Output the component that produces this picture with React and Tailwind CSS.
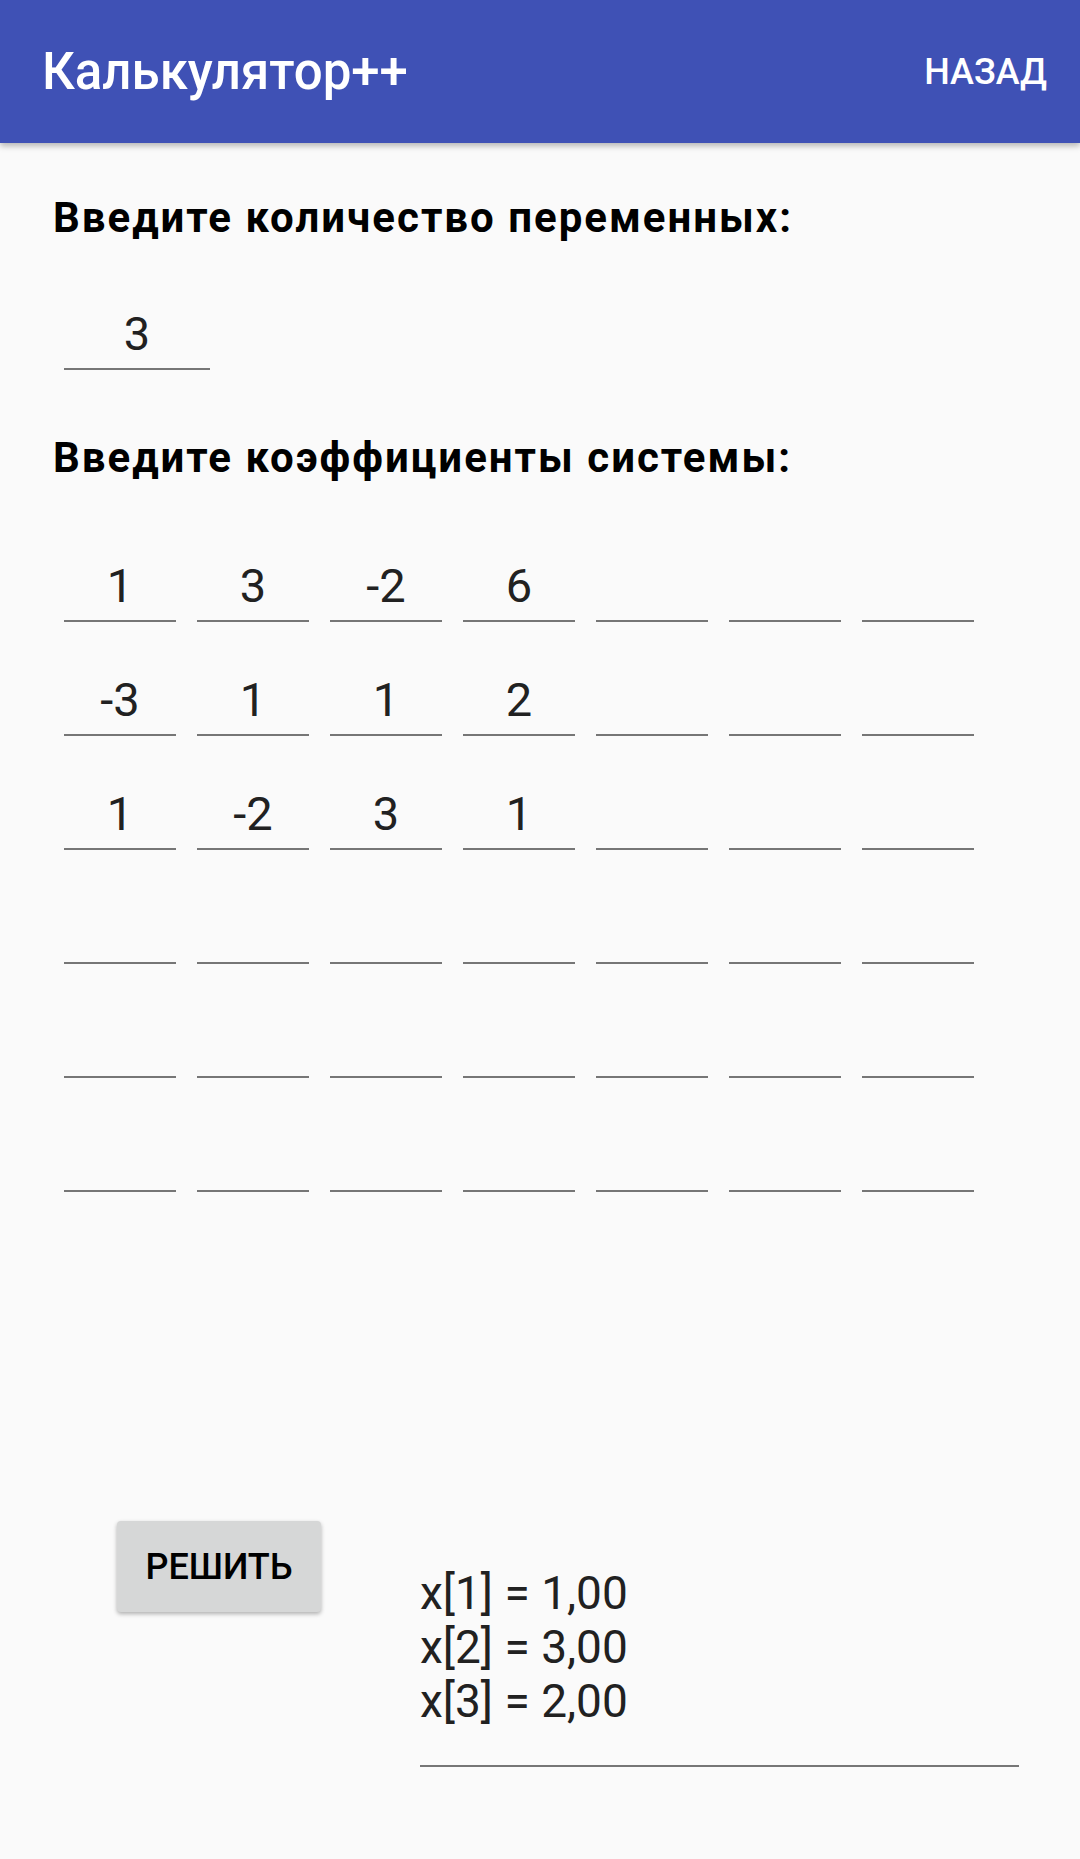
import React from 'react';

const rows = [
  ['1', '3', '-2', '6', '', '', ''],
  ['-3', '1', '1', '2', '', '', ''],
  ['1', '-2', '3', '1', '', '', ''],
  ['', '', '', '', '', '', ''],
  ['', '', '', '', '', '', ''],
  ['', '', '', '', '', '', ''],
];

const Cell = ({ value, width = 'w-[112px]' }) => (
  <div className={`${width} h-[64px] pb-[6px] border-b-2 border-[#767676] text-center text-[47px] leading-[56px] text-[#212121]`}>
    {value}
  </div>
);

export default function App() {
  return (
    <div className="w-[1080px] min-h-[1859px] bg-[#fafafa] flex flex-col" style={{ fontFamily: 'Roboto, "Noto Sans", sans-serif' }}>
      {/* Toolbar */}
      <div className="relative z-10 h-[143px] bg-[#3f51b5] flex items-center justify-between pl-[42px] pr-[33px] shadow-[0_3px_6px_rgba(0,0,0,0.28)]">
        <span className="text-white text-[51px] font-medium leading-none">Калькулятор++</span>
        <span className="text-white text-[36px] font-medium leading-none">НАЗАД</span>
      </div>

      {/* Number of variables */}
      <h2 className="mt-[50px] pl-[53px] text-[42px] leading-[50px] font-bold tracking-[2px] text-black">
        Введите количество переменных:
      </h2>
      <div className="mt-[63px] ml-[64px]">
        <Cell value="3" width="w-[146px]" />
      </div>

      {/* Coefficients */}
      <h2 className="mt-[63px] pl-[53px] text-[42px] leading-[50px] font-bold tracking-[2px] text-black">
        Введите коэффициенты системы:
      </h2>
      <div className="mt-[75px] ml-[64px] flex flex-col gap-[50px]">
        {rows.map((row, i) => (
          <div key={i} className="flex gap-[21px]">
            {row.map((v, j) => (
              <Cell key={j} value={v} />
            ))}
          </div>
        ))}
      </div>

      {/* Solve + result */}
      <div className="mt-[329px] flex items-start">
        <button className="ml-[117px] w-[204px] h-[91px] rounded-[4px] bg-[#d6d7d7] shadow-[0_2px_4px_rgba(0,0,0,0.3)] text-[36px] font-medium text-black">
          РЕШИТЬ
        </button>
        <div className="ml-[99px] mt-[45px] w-[599px] pb-[37px] border-b-2 border-[#767676] text-[46px] leading-[54px] text-[#212121]">
          <div>x[1] = 1,00</div>
          <div>x[2] = 3,00</div>
          <div>x[3] = 2,00</div>
        </div>
      </div>
    </div>
  );
}
